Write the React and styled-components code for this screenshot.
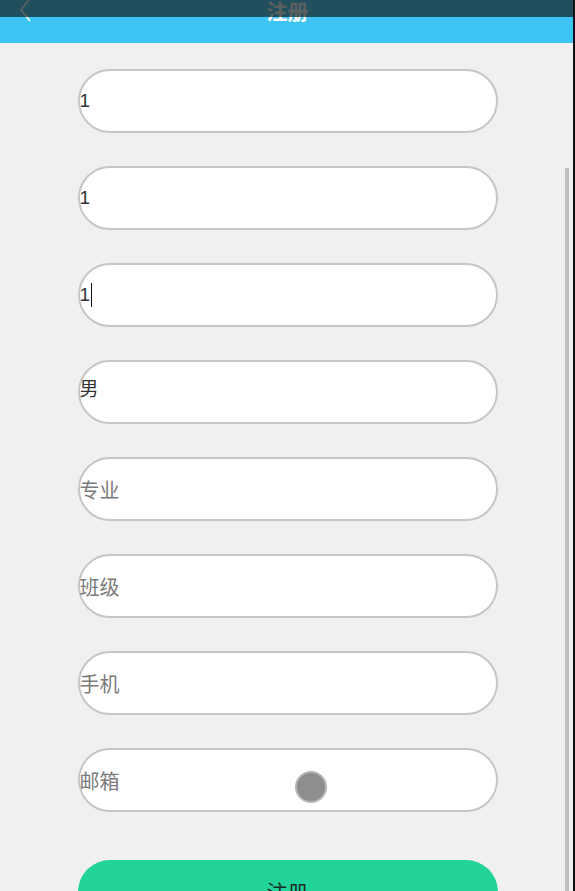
import React from "react";
import styled, { createGlobalStyle } from "styled-components";

const Global = createGlobalStyle`
  html, body {
    margin: 0;
    padding: 0;
    background: #f0f0f0;
    font-family: "Liberation Sans", "Noto Sans CJK SC", sans-serif;
    overflow: hidden;
  }
`;

const Page = styled.div`
  position: relative;
  width: 575px;
  height: 891px;
  overflow: hidden;
  background: #f0f0f0;
`;

const Header = styled.div`
  position: relative;
  height: 43px;
  background: #3ec5f5;
  display: grid;
  grid-template-columns: 1fr auto 1fr;
  align-items: start;
`;

const StatusShade = styled.div`
  position: absolute;
  left: 0;
  top: 0;
  right: 0;
  height: 17px;
  background: rgba(23, 28, 29, 0.7);
`;

const Back = styled.div`
  padding-left: 16px;
  margin-top: -3px;
  display: flex;
`;

const Title = styled.div`
  color: #fff;
  font-size: 21px;
  font-weight: bold;
  line-height: 24px;
  margin-top: 0px;
`;

const Form = styled.div`
  display: flex;
  flex-direction: column;
  align-items: center;
  gap: 33px;
  padding-top: 26px;
`;

const Field = styled.div`
  box-sizing: border-box;
  width: 420px;
  height: 64px;
  border: 2px solid #c6c6c6;
  border-radius: 32px;
  background: #fff;
  display: flex;
  align-items: center;
  padding-left: 0;
  padding-bottom: ${(p) => (p.$high ? "10px" : "0")};
  font-size: ${(p) => (p.$placeholder ? "20px" : "19px")};
  color: ${(p) => (p.$placeholder ? "#7b7b7b" : "#333")};
`;

const Caret = styled.span`
  display: inline-block;
  width: 1px;
  height: 24px;
  background: #111;
  margin-left: 1px;
`;

const Submit = styled.div`
  box-sizing: border-box;
  width: 420px;
  height: 64px;
  margin-top: 15px;
  border-radius: 32px;
  background: #22d39a;
  color: #1d2a26;
  font-size: 21px;
  display: flex;
  justify-content: center;
  padding-top: 16px;
`;

const Touch = styled.div`
  position: absolute;
  left: 295px;
  top: 771px;
  width: 32px;
  height: 32px;
  box-sizing: border-box;
  border-radius: 50%;
  background: #8e8e8e;
  border: 2px solid #b5b5b5;
`;

const Scrollbar = styled.div`
  position: absolute;
  left: 565px;
  top: 168px;
  width: 4px;
  bottom: 0;
  background: #bfbfbf;
`;

const Edge = styled.div`
  position: absolute;
  right: 0;
  top: 0;
  bottom: 0;
  width: 2px;
  background: #111;
`;

const fields = [
  { text: "1" },
  { text: "1" },
  { text: "1", caret: true },
  { text: "男", high: true },
  { text: "专业", placeholder: true },
  { text: "班级", placeholder: true },
  { text: "手机", placeholder: true },
  { text: "邮箱", placeholder: true },
];

export default function App() {
  return (
    <Page>
      <Global />
      <Header>
        <Back>
          <svg width="18" height="26" viewBox="0 0 18 26">
            <polyline
              points="15,0 5,13 14,24"
              fill="none"
              stroke="#ffffff"
              strokeWidth="1.6"
            />
          </svg>
        </Back>
        <Title>注册</Title>
        <div />
        <StatusShade />
      </Header>
      <Form>
        {fields.map((f, i) => (
          <Field key={i} $placeholder={f.placeholder} $high={f.high}>
            {f.text}
            {f.caret && <Caret />}
          </Field>
        ))}
        <Submit>注册</Submit>
      </Form>
      <Touch />
      <Scrollbar />
      <Edge />
    </Page>
  );
}
